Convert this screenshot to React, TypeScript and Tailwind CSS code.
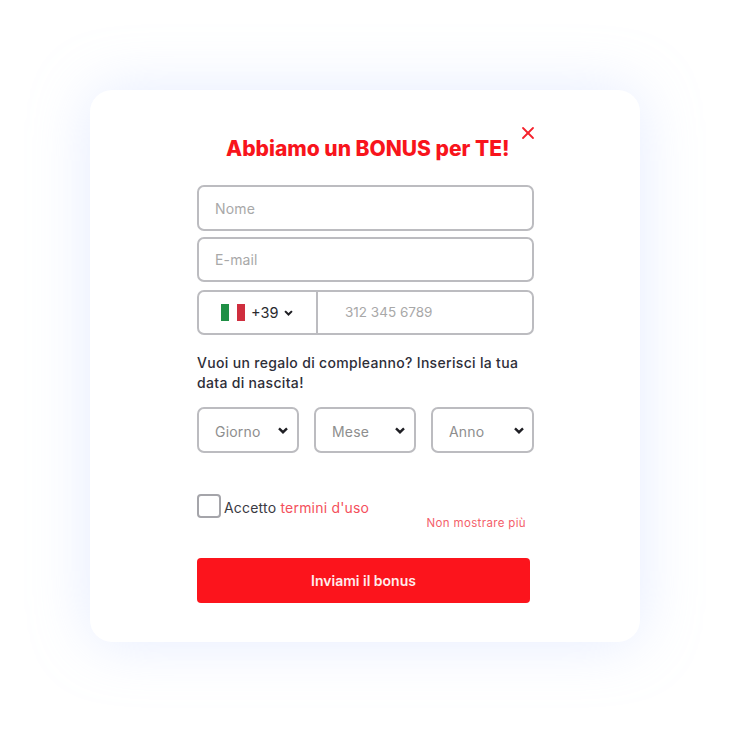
import { X } from "lucide-react";

const font = "font-['Inter','Noto_Sans',sans-serif]";

function Chevron({ className }: { className?: string }) {
  return (
    <svg viewBox="0 0 10 7" className={className} fill="none" stroke="#1f1f24" strokeWidth="2.4">
      <path d="M1 1.3 5 5.2 9 1.3" />
    </svg>
  );
}

function TextField({ placeholder, height }: { placeholder: string; height: string }) {
  return (
    <input
      placeholder={placeholder}
      className={`w-full rounded-[7px] border-2 border-[#bcbcc0] bg-white pl-4 text-[14px] tracking-[0.15px] outline-none placeholder:text-[#a8a8a8] ${height}`}
    />
  );
}

function DateSelect({ label, width, right }: { label: string; width: string; right: string }) {
  return (
    <div className={`flex h-[46px] items-center justify-between rounded-[7px] border-2 border-[#bcbcc0] bg-white pl-4 ${width} ${right}`}>
      <span className="mt-[2px] text-[14px] tracking-[0.2px] text-[#8e8e8e]">{label}</span>
      <Chevron className="h-[7px] w-[10px]" />
    </div>
  );
}

export default function App() {
  return (
    <div className={`relative h-[732px] w-[730px] overflow-hidden bg-white pt-[90px] ${font}`}>
      <div className="relative mx-auto h-[552px] w-[550px] rounded-[22px] bg-white pl-[107px] pr-[106px] pt-[46px] shadow-[0_0_60px_rgba(180,200,255,0.35)]">
        <button className="absolute right-[102px] top-[33px] text-[#f5222d]">
          <X size={20} strokeWidth={2.2} />
        </button>

        <h1 className="ml-[29px] whitespace-nowrap text-[21px] font-extrabold leading-[26px] text-[#f8141c]">
          Abbiamo un BONUS per TE!
        </h1>

        <div className="mt-[23px] flex flex-col">
          <TextField placeholder="Nome" height="h-[46px]" />
          <div className="mt-[6px]">
            <TextField placeholder="E-mail" height="h-[45px]" />
          </div>
          <div className="mt-[8px] flex h-[45px] rounded-[7px] border-2 border-[#bcbcc0] bg-white">
            <div className="flex w-[119px] items-center border-r-2 border-[#bcbcc0] pl-[22px]">
              <span className="flex h-[17px] w-[24px]">
                <span className="flex-1 bg-[#1f8f45]" />
                <span className="flex-1 bg-white" />
                <span className="flex-1 bg-[#cf2e3e]" />
              </span>
              <span className="ml-[6px] text-[14.5px] text-[#2a2a2e]">+39</span>
              <Chevron className="ml-[6px] mt-[1px] h-[6px] w-[9px]" />
            </div>
            <input
              placeholder="312 345 6789"
              className="min-w-0 flex-1 pl-[27px] text-[13.5px] outline-none placeholder:text-[#a8a8a8]"
            />
          </div>
        </div>

        <p className="mt-[18px] whitespace-nowrap text-[14px] font-medium leading-[20px] tracking-[0.32px] text-[#2e2e38]">
          Vuoi un regalo di compleanno? Inserisci la tua
          <br />
          data di nascita!
        </p>

        <div className="mt-[14px] flex justify-between">
          <DateSelect label="Giorno" width="w-[102px]" right="pr-[9px]" />
          <DateSelect label="Mese" width="w-[102px]" right="pr-[9px]" />
          <DateSelect label="Anno" width="w-[103px]" right="pr-[8px]" />
        </div>

        <div className="mt-[41px] flex items-center">
          <span className="h-[24px] w-[24px] rounded-[4px] border-2 border-[#a5a5aa] bg-white" />
          <span className="ml-[3px] mt-[2px] text-[14px] tracking-[0.2px] text-[#3a3a42]">
            Accetto <span className="text-[#f4505c]">termini d'uso</span>
          </span>
        </div>
        <div className="mr-[8px] mt-[-2px] text-right text-[11.5px] leading-[14px] tracking-[0.35px] text-[#f4606a]">
          Non mostrare più
        </div>

        <button className="mt-[28px] flex h-[45px] w-[333px] items-center justify-center rounded-[4px] bg-[#fc141c] text-[14px] font-semibold text-[#ffecec]">
          Inviami il bonus
        </button>
      </div>
    </div>
  );
}
